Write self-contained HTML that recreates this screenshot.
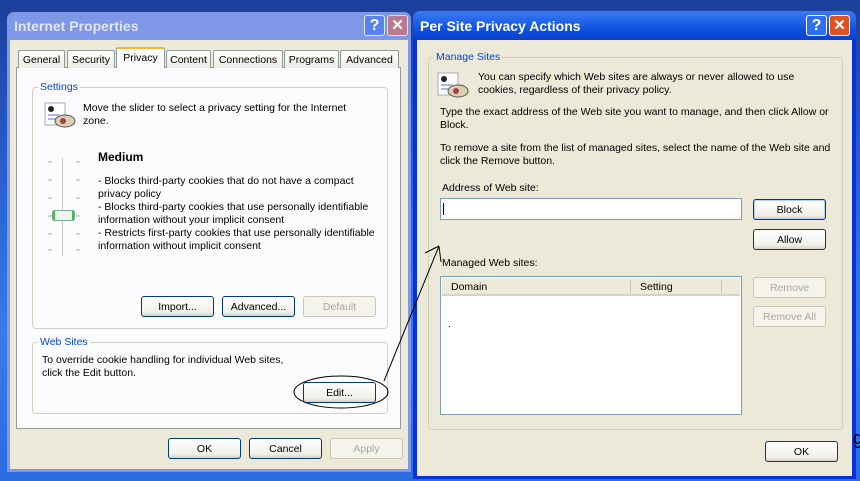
<!DOCTYPE html>
<html><head><style>
*{margin:0;padding:0;box-sizing:border-box}
body{width:860px;height:481px;overflow:hidden;position:relative;font-family:"Liberation Sans",sans-serif;font-size:10.5px;color:#000;background:linear-gradient(180deg,#1b3f9a 0%,#2a63d6 40%,#3a7ae8 70%,#2b6be0 100%)}
.a{position:absolute}
.t{padding-top:2px}
.btn{position:absolute;border:1px solid #003c74;border-radius:3px;background:linear-gradient(#fff,#f0f0ea 80%,#d6d0c5);text-align:center;font-size:10.5px;line-height:20px}
.dis{border-color:#c9c7ba;color:#aca899;background:#f5f4ea}
.grp{position:absolute;border:1px solid #d0d0bf;border-radius:4px}
.gl{position:absolute;color:#0046d5;padding:0 2px;font-size:10.5px}
.tab{position:absolute;top:50px;height:18px;border:1px solid #919b9c;border-bottom:none;border-radius:2px 2px 0 0;background:linear-gradient(#fff,#ecebe5);text-align:center;line-height:18px;font-size:10.5px}
</style></head><body>
<!-- left window -->
<div class="a" style="left:7px;top:12px;width:404px;height:460px;background:#7e97e6;border-radius:7px 7px 0 0"></div>
<div class="a" style="left:14px;top:18px;color:#dfe6fb;font-size:14px;font-weight:bold">Internet Properties</div>
<div class="a" style="left:364px;top:15px;width:21px;height:21px;background:#5a82ee;border:1px solid #e0e8ff;border-radius:3px;color:#fff;font-weight:bold;font-size:16px;text-align:center;line-height:19px">?</div>
<div class="a" style="left:387px;top:15px;width:21px;height:21px;background:#b87a8c;border:1px solid #f0d8e0;border-radius:3px;color:#fff;font-weight:bold;font-size:15px;text-align:center;line-height:19px">✕</div>
<div class="a" style="left:10px;top:40px;width:398px;height:429px;background:#ece9d8"></div>
<div class="a" style="left:16px;top:67px;width:385px;height:362px;background:#fcfcfe;border:1px solid #919b9c"></div>
<div class="tab" style="left:18px;width:47px">General</div>
<div class="tab" style="left:67px;width:48px">Security</div>
<div class="tab" style="left:116px;top:47px;height:21px;width:49px;background:#fcfcfe;border-top:2px solid #f7b53a;border-bottom:none">Privacy</div>
<div class="tab" style="left:166px;width:45px">Content</div>
<div class="tab" style="left:213px;width:70px">Connections</div>
<div class="tab" style="left:284px;width:55px">Programs</div>
<div class="tab" style="left:340px;width:59px">Advanced</div>
<div class="grp" style="left:32px;top:87px;width:356px;height:242px"></div>
<div class="gl" style="left:38px;top:81px;background:#fcfcfe">Settings</div>
<svg class="a" style="left:43px;top:101px" width="34" height="28"><rect x="2" y="2" width="20" height="22" fill="#fff" stroke="#aab"/><circle cx="8" cy="8" r="3" fill="#222"/><line x1="5" y1="14" x2="16" y2="14" stroke="#66c"/><line x1="5" y1="18" x2="14" y2="18" stroke="#66c"/><ellipse cx="22" cy="20" rx="10" ry="6" fill="#d8d0b0" stroke="#555"/><circle cx="20" cy="20" r="3" fill="#a04050"/></svg>
<div class="a t" style="left:83px;top:100px;width:280px;line-height:13px">Move the slider to select a privacy setting for the Internet zone.</div>
<div class="a" style="left:62px;top:158px;width:2px;height:98px;background:#c8c8c0;border-right:1px solid #fff"></div>
<svg class="a" style="left:44px;top:155px" width="40" height="100"><g stroke="#aaa"><line x1="4" y1="7" x2="8" y2="7"/><line x1="32" y1="7" x2="36" y2="7"/><line x1="4" y1="25" x2="8" y2="25"/><line x1="32" y1="25" x2="36" y2="25"/><line x1="4" y1="43" x2="8" y2="43"/><line x1="32" y1="43" x2="36" y2="43"/><line x1="4" y1="61" x2="8" y2="61"/><line x1="32" y1="61" x2="36" y2="61"/><line x1="4" y1="79" x2="8" y2="79"/><line x1="32" y1="79" x2="36" y2="79"/><line x1="4" y1="95" x2="8" y2="95"/><line x1="32" y1="95" x2="36" y2="95"/></g><rect x="8.5" y="55.5" width="22" height="10" rx="2" fill="#f4f4ee" stroke="#7a9"/><rect x="9" y="56" width="2" height="9" fill="#3c3"/><rect x="28" y="56" width="2" height="9" fill="#3c3"/></svg>
<div class="a" style="left:98px;top:150px;font-weight:bold;font-size:12px">Medium</div>
<div class="a t" style="left:98px;top:173px;width:285px;line-height:13px">- Blocks third-party cookies that do not have a compact privacy policy<br>- Blocks third-party cookies that use personally identifiable information without your implicit consent<br>- Restricts first-party cookies that use personally identifiable information without implicit consent</div>
<div class="btn" style="left:141px;top:296px;width:73px;height:21px">Import...</div>
<div class="btn" style="left:222px;top:296px;width:73px;height:21px">Advanced...</div>
<div class="btn dis" style="left:303px;top:296px;width:73px;height:21px">Default</div>
<div class="grp" style="left:32px;top:342px;width:356px;height:72px"></div>
<div class="gl" style="left:38px;top:336px;background:#fcfcfe">Web Sites</div>
<div class="a t" style="left:42px;top:352px;line-height:13px">To override cookie handling for individual Web sites,<br>click the Edit button.</div>
<div class="btn" style="left:303px;top:382px;width:73px;height:21px">Edit...</div>
<div class="btn" style="left:168px;top:438px;width:73px;height:21px">OK</div>
<div class="btn" style="left:249px;top:438px;width:73px;height:21px">Cancel</div>
<div class="btn dis" style="left:330px;top:438px;width:73px;height:21px">Apply</div>
<!-- right window -->
<div class="a" style="left:413px;top:11px;width:443px;height:468px;border-radius:7px 7px 0 0;background:linear-gradient(#3a7bf0,#0b4fe0 20px,#0a3fd0 30px,#0831d9 30px)"></div>
<div class="a" style="left:420px;top:18px;color:#fff;font-size:14px;font-weight:bold">Per Site Privacy Actions</div>
<div class="a" style="left:806px;top:15px;width:21px;height:21px;background:#2d6ef4;border:1px solid #fff;border-radius:3px;color:#fff;font-weight:bold;font-size:16px;text-align:center;line-height:19px">?</div>
<div class="a" style="left:829px;top:15px;width:21px;height:21px;background:#e2501e;border:1px solid #fff;border-radius:3px;color:#fff;font-weight:bold;font-size:15px;text-align:center;line-height:19px">✕</div>
<div class="a" style="left:417px;top:40px;width:435px;height:436px;background:#ece9d8"></div>
<div class="grp" style="left:428px;top:57px;width:415px;height:373px"></div>
<div class="gl" style="left:434px;top:51px;background:#ece9d8">Manage Sites</div>
<svg class="a" style="left:436px;top:71px" width="34" height="28"><rect x="2" y="2" width="20" height="22" fill="#fff" stroke="#aab"/><circle cx="8" cy="8" r="3" fill="#222"/><line x1="5" y1="14" x2="16" y2="14" stroke="#66c"/><line x1="5" y1="18" x2="14" y2="18" stroke="#66c"/><ellipse cx="22" cy="20" rx="10" ry="6" fill="#d8d0b0" stroke="#555"/><circle cx="20" cy="20" r="3" fill="#a04050"/></svg>
<div class="a t" style="left:478px;top:69px;width:340px;line-height:13px">You can specify which Web sites are always or never allowed to use cookies, regardless of their privacy policy.</div>
<div class="a t" style="left:440px;top:104px;width:395px;line-height:13px">Type the exact address of the Web site you want to manage, and then click Allow or Block.</div>
<div class="a t" style="left:440px;top:140px;width:395px;line-height:13px">To remove a site from the list of managed sites, select the name of the Web site and click the Remove button.</div>
<div class="a t" style="left:442px;top:180px">Address of Web site:</div>
<div class="a" style="left:440px;top:198px;width:302px;height:22px;background:#fff;border:1px solid #7f9db9"></div>
<div class="a" style="left:443px;top:203px;width:1px;height:12px;background:#000"></div>
<div class="btn" style="left:753px;top:199px;width:73px;height:21px;box-shadow:inset 0 0 0 1px #b8d0f8">Block</div>
<div class="btn" style="left:753px;top:229px;width:73px;height:21px">Allow</div>
<div class="a t" style="left:442px;top:255px">Managed Web sites:</div>
<div class="a" style="left:440px;top:276px;width:302px;height:139px;background:#fff;border:1px solid #7f9db9"></div>
<div class="a" style="left:442px;top:278px;width:298px;height:18px;background:#ebeadb;border-bottom:2px solid #d6d2c2"></div>
<div class="a t" style="left:451px;top:279px">Domain</div>
<div class="a" style="left:630px;top:280px;width:1px;height:13px;background:#c7c5b2"></div>
<div class="a t" style="left:640px;top:279px">Setting</div>
<div class="a" style="left:721px;top:280px;width:1px;height:13px;background:#c7c5b2"></div>
<div class="a" style="left:449px;top:326px;width:1px;height:1px;background:#000"></div>
<div class="btn dis" style="left:753px;top:277px;width:73px;height:21px">Remove</div>
<div class="btn dis" style="left:753px;top:306px;width:73px;height:21px">Remove All</div>
<div class="btn" style="left:765px;top:441px;width:73px;height:21px">OK</div>
<div class="a" style="left:853px;top:428px;font-size:18px;color:#000;text-decoration:underline">g</div>
<!-- annotation -->
<svg class="a" style="left:0;top:0" width="860" height="481"><ellipse cx="341" cy="392" rx="47" ry="16" fill="none" stroke="#000"/><path d="M384 381 L439 246 M439 246 L425 253 M439 246 L441 262" fill="none" stroke="#000"/></svg>
</body></html>
